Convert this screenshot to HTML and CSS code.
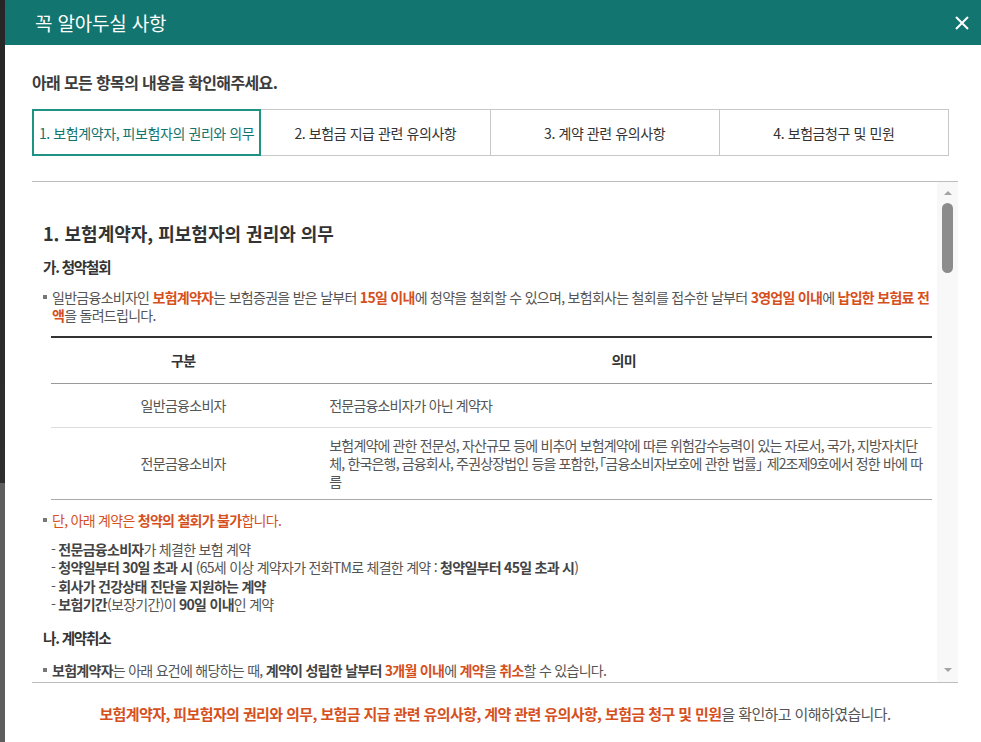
FILE: index.html
```html
<!DOCTYPE html>
<html lang="ko">
<head>
<meta charset="utf-8">
<title>꼭 알아두실 사항</title>
<link rel="stylesheet" href="styles.css">
</head>
<body>
<div class="page">
  <div class="backdrop"></div>
  <div class="modal">
    <header class="modal-head">
      <h1 class="modal-title">꼭 알아두실 사항</h1>
      <button class="close" type="button" aria-label="닫기">
        <svg width="14" height="14" viewBox="0 0 14 14"><path d="M1 1L13 13M13 1L1 13" stroke="#fff" stroke-width="2" fill="none"/></svg>
      </button>
    </header>
    <div class="modal-body">
      <p class="intro">아래 모든 항목의 내용을 확인해주세요.</p>
      <ul class="tabs">
        <li class="tab active">1. 보험계약자, 피보험자의 권리와 의무</li>
        <li class="tab">2. 보험금 지급 관련 유의사항</li>
        <li class="tab">3. 계약 관련 유의사항</li>
        <li class="tab">4. 보험금청구 및 민원</li>
      </ul>
      <div class="scroll-box">
        <div class="scroll-content">
          <h2 class="sec-title">1. 보험계약자, 피보험자의 권리와 의무</h2>
          <h3 class="sub-title">가. 청약철회</h3>
          <p class="bullet">일반금융소비자인 <b class="hl">보험계약자</b>는 보험증권을 받은 날부터 <b class="hl">15일 이내</b>에 청약을 철회할 수 있으며, 보험회사는 철회를 접수한 날부터 <b class="hl">3영업일 이내</b>에 <b class="hl">납입한 보험료 전액</b>을 돌려드립니다.</p>
          <table class="info-table">
            <thead>
              <tr><th class="col-a">구분</th><th>의미</th></tr>
            </thead>
            <tbody>
              <tr class="row-short"><td class="col-a">일반금융소비자</td><td class="col-b">전문금융소비자가 아닌 계약자</td></tr>
              <tr class="row-long"><td class="col-a">전문금융소비자</td><td class="col-b">보험계약에 관한 전문성, 자산규모 등에 비추어 보험계약에 따른 위험감수능력이 있는 자로서, 국가, 지방자치단<br>체, 한국은행, 금융회사, 주권상장법인 등을 포함한,<span class="bk-open">「</span>금융소비자보호에 관한 법률<span class="bk-close">」</span> 제2조제9호에서 정한 바에 따<br>름</td></tr>
            </tbody>
          </table>
          <p class="bullet warn">단, 아래 계약은 <b>청약의 철회가 불가</b>합니다.</p>
          <ul class="dash-list">
            <li><b>전문금융소비자</b>가 체결한 보험 계약</li>
            <li><b>청약일부터 30일 초과 시</b> (65세 이상 계약자가 전화TM로 체결한 계약 : <b>청약일부터 45일 초과 시</b>)</li>
            <li><b>회사가 건강상태 진단을 지원하는 계약</b></li>
            <li><b>보험기간</b>(보장기간)이 <b>90일 이내</b>인 계약</li>
          </ul>
          <h3 class="sub-title sub-gap">나. 계약취소</h3>
          <p class="bullet last"><b>보험계약자</b>는 아래 요건에 해당하는 때, <b>계약이 성립한 날부터</b> <b class="hl">3개월 이내</b>에 <b class="hl">계약</b>을 <b class="hl">취소</b>할 수 있습니다.</p>
        </div>
        <div class="scrollbar">
          <span class="arrow up"></span>
          <span class="thumb"></span>
          <span class="arrow down"></span>
        </div>
      </div>
      <p class="agree"><b>보험계약자, 피보험자의 권리와 의무, 보험금 지급 관련 유의사항, 계약 관련 유의사항, 보험금 청구 및 민원</b>을 확인하고 이해하였습니다.</p>
    </div>
  </div>
</div>
</body>
</html>
```
FILE: styles.css
```css
* { box-sizing: border-box; margin: 0; padding: 0; }
html, body { width: 981px; height: 742px; overflow: hidden; }
body {
  font-family: "Noto Sans CJK KR", "Noto Sans", sans-serif;
  color: #555;
  letter-spacing: -0.045em;
  background: #2a2a2a;
}
.page { display: flex; height: 742px; }
.backdrop {
  width: 5px;
  background: linear-gradient(#262626 0, #2e2e2e 483px, #5e5e5e 483px, #5e5e5e 100%);
}
.modal { flex: 1; background: #fff; display: flex; flex-direction: column; }

.modal-head {
  height: 45px;
  background: #137570;
  display: flex;
  align-items: center;
  justify-content: space-between;
  padding: 0 12px 0 30px;
}
.modal-title { font-size: 19px; font-weight: 400; color: #fff; letter-spacing: -0.01em; line-height: 26px; }
.close { background: none; border: 0; display: flex; width: 14px; height: 14px; }

.modal-body { padding: 27px 23px 0 27px; }
.intro { font-size: 16px; line-height: 20px; font-weight: 700; color: #3c3c3c; letter-spacing: -0.04em; }

.tabs {
  list-style: none;
  display: grid;
  grid-template-columns: repeat(4, 1fr);
  margin: 17px 9px 0 0;
  height: 47px;
}
.tab {
  border: 1px solid #c8c8c8;
  margin-left: -1px;
  display: flex;
  align-items: center;
  justify-content: center;
  white-space: nowrap;
  font-size: 14px;
  letter-spacing: -0.03em;
  color: #333;
}
.tab:first-child { margin-left: 0; }
.tab.active {
  border: 2px solid #1f9383;
  color: #137570;
  position: relative;
  z-index: 1;
}

.scroll-box {
  margin-top: 25px;
  border-top: 1px solid #bdbdbd;
  border-bottom: 1px solid #bdbdbd;
  height: 502px;
  display: flex;
}
.scroll-content { flex: 1; overflow: hidden; padding: 38px 5px 0 11px; }
.scrollbar {
  width: 21px;
  background: #f8f8f8;
  display: flex;
  flex-direction: column;
  align-items: center;
  padding: 9px 0 10px;
}
.arrow { width: 0; height: 0; border-left: 4px solid transparent; border-right: 4px solid transparent; }
.arrow.up { border-bottom: 4px solid #a3a3a3; }
.arrow.down { border-top: 4px solid #a3a3a3; margin-top: auto; }
.thumb { width: 11px; height: 70px; margin-top: 8px; background: #8c8c8c; border-radius: 6px; }

.sec-title { font-size: 18px; line-height: 26px; font-weight: 700; color: #333; letter-spacing: 0; }
.sub-title { font-size: 14.5px; line-height: 22px; font-weight: 700; color: #333; margin-top: 10px; letter-spacing: -0.08em; }
.sub-gap { margin-top: 13px; }

.bullet {
  position: relative;
  margin-top: 10px;
  padding-left: 9px;
  font-size: 14px;
  line-height: 18px;
}
.bullet::before {
  content: "";
  position: absolute;
  left: 0;
  top: 7px;
  width: 4px;
  height: 4px;
  background: #777;
}
.bullet b { color: #444; }
.bullet b.hl, .warn, .warn b { color: #d5501c; }
.warn { margin-top: 11px; }
.last { margin-top: 12px; }

.info-table {
  width: calc(100% - 8px);
  margin: 12px 0 0 8px;
  border-collapse: collapse;
  border-top: 2px solid #333;
  font-size: 14px;
}
.info-table th {
  height: 46px;
  font-size: 14px;
  font-weight: 700;
  color: #333;
  border-bottom: 1px solid #999;
}
.info-table .col-a { width: 30%; text-align: center; }
.info-table td { line-height: 18px; color: #555; }
.info-table .col-b { padding: 0 0 0 14px; letter-spacing: -0.06em; }
.bk-open { margin-left: -0.4em; }
.bk-close { margin-right: -0.4em; }
.row-short td { height: 44px; border-bottom: 1px solid #ddd; }
.row-long td { height: 72px; border-bottom: 1px solid #aaa; }

.dash-list {
  list-style: none;
  margin-top: 11px;
  padding-left: 8px;
  font-size: 14px;
  line-height: 18.5px;
}
.dash-list li::before { content: "- "; }
.dash-list b { color: #444; }

.agree {
  margin-top: 21px;
  text-align: center;
  font-size: 15px;
  line-height: 20px;
  color: #555;
  letter-spacing: -0.04em;
}
.agree b { color: #d5501c; }
```
